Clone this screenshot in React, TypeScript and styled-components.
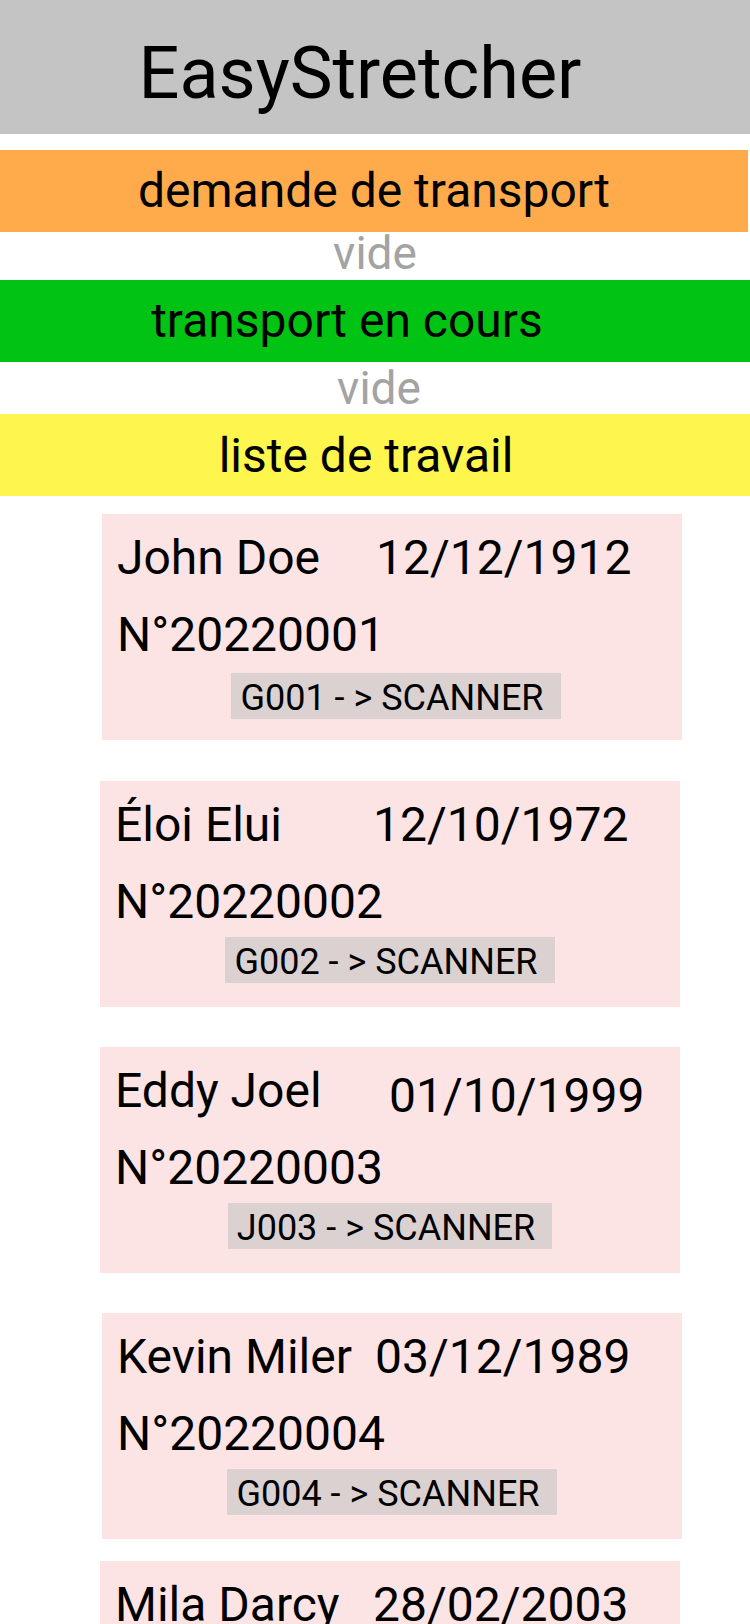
import React from "react";
import styled, { createGlobalStyle } from "styled-components";

const GlobalStyle = createGlobalStyle`
  html, body {
    margin: 0;
    padding: 0;
    background: #ffffff;
  }
  body {
    font-family: Roboto, "Noto Sans", Arial, sans-serif;
    color: #000000;
    overflow: hidden;
  }
  * { box-sizing: border-box; }
`;

const Page = styled.div`
  width: 750px;
  height: 1624px;
  overflow: hidden;
  display: flex;
  flex-direction: column;
  background: #ffffff;
`;

const Header = styled.header`
  height: 134px;
  flex-shrink: 0;
  background: #c4c4c4;
  padding: 31px 30px 0 0;
  text-align: center;
  margin-bottom: 16px;
`;

const Title = styled.h1`
  margin: 0;
  font-size: 72px;
  font-weight: 400;
  line-height: normal;
`;

const Band = styled.div<{ $bg: string; $pt?: number; $shift?: number; $trimRight?: number }>`
  height: 82px;
  flex-shrink: 0;
  background: ${(p) => p.$bg};
  padding-top: ${(p) => p.$pt ?? 12}px;
  padding-right: ${(p) => (p.$shift ?? 0) * 2}px;
  margin-right: ${(p) => p.$trimRight ?? 0}px;
  text-align: center;
  font-size: 48px;
  line-height: normal;
`;

const Empty = styled.div<{ $h: number; $pt: number; $shift?: number }>`
  height: ${(p) => p.$h}px;
  flex-shrink: 0;
  padding-top: ${(p) => p.$pt}px;
  padding-left: ${(p) => (p.$shift ?? 0) * 2}px;
  text-align: center;
  font-size: 46px;
  line-height: 43px;
  color: #a3a3a3;
`;

const List = styled.div`
  display: flex;
  flex-direction: column;
  padding-top: 18px;
`;

const Card = styled.article<{ $x: number; $mt: number }>`
  width: 580px;
  height: 226px;
  margin-left: ${(p) => p.$x}px;
  margin-top: ${(p) => p.$mt}px;
  background: #fce4e4;
  padding: 15px 0 0 15px;
  display: flex;
  flex-direction: column;
  flex-shrink: 0;
`;

const TopRow = styled.div`
  display: flex;
  align-items: flex-start;
  height: 56px;
  font-size: 48px;
  line-height: normal;
`;

const Name = styled.span`
  width: 258px;
  flex-shrink: 0;
  white-space: nowrap;
`;

const BirthDate = styled.span<{ $dx?: number; $dy?: number }>`
  white-space: nowrap;
  margin-left: ${(p) => p.$dx ?? 0}px;
  margin-top: ${(p) => p.$dy ?? 0}px;
`;

const Number = styled.div`
  margin-top: 21px;
  font-size: 48px;
  line-height: normal;
`;

const Badge = styled.div<{ $mt?: number; $dx?: number }>`
  align-self: center;
  margin-top: ${(p) => p.$mt ?? 7}px;
  margin-left: ${(p) => -15 + (p.$dx ?? 0) * 2}px;
  height: 46px;
  padding: 4px 17px 0 9px;
  background: #dbd1d1;
  font-size: 36px;
  line-height: 42px;
  white-space: nowrap;
`;

type Patient = {
  name: string;
  date: string;
  num: string;
  route: string;
  x: number;
  mt: number;
  dx?: number;
  dy?: number;
  badgeMt?: number;
  badgeDx?: number;
};

const patients: Patient[] = [
  { name: "John Doe", date: "12/12/1912", num: "N°20220001", route: "G001 - > SCANNER", x: 102, mt: 0, dx: 1, badgeMt: 10, badgeDx: 4 },
  { name: "Éloi Elui", date: "12/10/1972", num: "N°20220002", route: "G002 - > SCANNER", x: 100, mt: 41 },
  { name: "Eddy Joel", date: "01/10/1999", num: "N°20220003", route: "J003 - > SCANNER", x: 100, mt: 40, dx: 16, dy: 5 },
  { name: "Kevin Miler", date: "03/12/1989", num: "N°20220004", route: "G004 - > SCANNER", x: 102, mt: 40 },
  { name: "Mila Darcy", date: "28/02/2003", num: "N°20220005", route: "G005 - > SCANNER", x: 100, mt: 22 },
];

export default function App() {
  return (
    <>
      <GlobalStyle />
      <Page>
        <Header>
          <Title>EasyStretcher</Title>
        </Header>
        <Band $bg="#ffab4c" $trimRight={2}>demande de transport</Band>
        <Empty $h={48} $pt={0}>vide</Empty>
        <Band $bg="#00c314" $shift={28}>transport en cours</Band>
        <Empty $h={52} $pt={5} $shift={4}>vide</Empty>
        <Band $bg="#fef64c" $pt={13} $shift={9}>liste de travail</Band>
        <List>
          {patients.map((p) => (
            <Card key={p.num} $x={p.x} $mt={p.mt}>
              <TopRow>
                <Name>{p.name}</Name>
                <BirthDate $dx={p.dx} $dy={p.dy}>{p.date}</BirthDate>
              </TopRow>
              <Number>{p.num}</Number>
              <Badge $mt={p.badgeMt} $dx={p.badgeDx}>{p.route}</Badge>
            </Card>
          ))}
        </List>
      </Page>
    </>
  );
}
